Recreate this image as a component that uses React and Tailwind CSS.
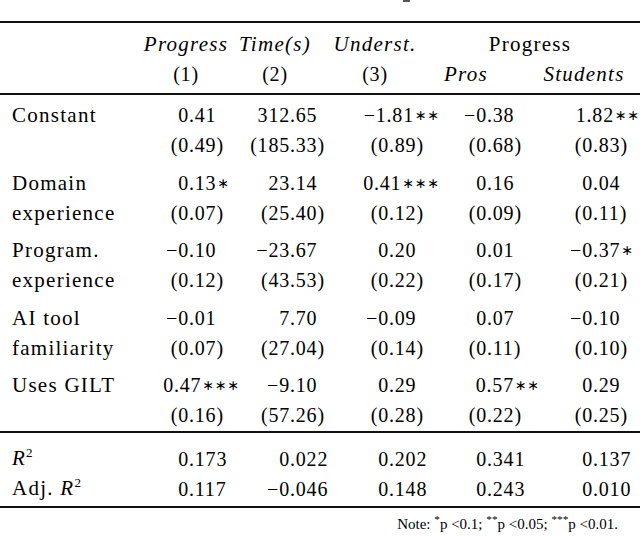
import React from "react";

const intWidths = ["w-[49px]", "w-[50px]", "w-[49px]", "w-[47px]", "w-[53px]"];

const groups = [
  {
    label: ["Constant", ""],
    est: ["0.41", "312.65", "−1.81**", "−0.38", "1.82**"],
    se: ["(0.49)", "(185.33)", "(0.89)", "(0.68)", "(0.83)"],
  },
  {
    label: ["Domain", "experience"],
    est: ["0.13*", "23.14", "0.41***", "0.16", "0.04"],
    se: ["(0.07)", "(25.40)", "(0.12)", "(0.09)", "(0.11)"],
  },
  {
    label: ["Program.", "experience"],
    est: ["−0.10", "−23.67", "0.20", "0.01", "−0.37*"],
    se: ["(0.12)", "(43.53)", "(0.22)", "(0.17)", "(0.21)"],
  },
  {
    label: ["AI tool", "familiarity"],
    est: ["−0.01", "7.70", "−0.09", "0.07", "−0.10"],
    se: ["(0.07)", "(27.04)", "(0.14)", "(0.11)", "(0.10)"],
  },
  {
    label: ["Uses GILT", ""],
    est: ["0.47***", "−9.10", "0.29", "0.57**", "0.29"],
    se: ["(0.16)", "(57.26)", "(0.28)", "(0.22)", "(0.25)"],
  },
];

const r2 = ["0.173", "0.022", "0.202", "0.341", "0.137"];
const adjR2 = ["0.117", "−0.046", "0.148", "0.243", "0.010"];

// split on the decimal point so every column lines up on it
function Num({ value, col }) {
  const stars = (value.match(/\*+$/) || [""])[0];
  const body = value.slice(0, value.length - stars.length);
  const dot = body.indexOf(".");
  const left = body.slice(0, dot);
  const right = body.slice(dot);
  return (
    <div className="flex whitespace-nowrap">
      <span className={`${intWidths[col]} text-right`}>{left}</span>
      <span>{right}</span>
      {stars && (
        <span className="text-[14px] ml-px font-['DejaVu_Sans',sans-serif]">
          {"∗".repeat(stars.length)}
        </span>
      )}
    </div>
  );
}

function Row({ label, values }) {
  return (
    <div className="grid grid-cols-[140px_100px_100px_100px_100px_100px] h-[30px] items-center">
      <div className="pl-3 text-[21px] tracking-[0.06em]">{label}</div>
      {values.map((v, i) => (
        <Num key={i} value={v} col={i} />
      ))}
    </div>
  );
}

function R2Label({ adj }) {
  return (
    <span>
      {adj ? "Adj. " : ""}
      <i>R</i>
      <span className="text-[13px] relative -top-[8px]">2</span>
    </span>
  );
}

export default function App() {
  return (
    <div className="w-[640px] h-[537px] bg-white text-black text-[20px] leading-[30px] tracking-[0.04em] overflow-hidden font-['Liberation_Serif',serif]">
      <div className="h-[21px]">
        <div className="ml-[403px] w-[7px] h-[2px] bg-[#555]" />
      </div>
      <div className="h-[2px] bg-[#111]" />

      <div className="pt-[6px] italic text-[21px] tracking-[0.06em]">
        <div className="grid grid-cols-[140px_92px_86px_114px_68px_40px_88px] h-[30px] items-center text-center">
          <div />
          <div>Progress</div>
          <div>Time(s)</div>
          <div>Underst.</div>
          <div className="col-span-3 not-italic">Progress</div>
        </div>
        <div className="grid grid-cols-[140px_92px_86px_114px_68px_40px_88px] h-[30px] items-center text-center">
          <div />
          <div className="not-italic text-[20px] tracking-[0.04em]">(1)</div>
          <div className="not-italic text-[20px] tracking-[0.04em]">(2)</div>
          <div className="not-italic text-[20px] tracking-[0.04em]">(3)</div>
          <div>Pros</div>
          <div />
          <div>Students</div>
        </div>
      </div>
      <div className="mt-[4px] h-[1.5px] bg-[#111]" />

      <div className="pt-[5.5px] flex flex-col gap-[7.5px]">
        {groups.map((g, i) => (
          <div key={i}>
            <Row label={g.label[0]} values={g.est} />
            <Row label={g.label[1]} values={g.se} />
          </div>
        ))}
      </div>
      <div className="mt-[1px] h-[1.5px] bg-[#111]" />

      <div className="pt-[10px]">
        <Row label={<R2Label />} values={r2} />
        <Row label={<R2Label adj />} values={adjR2} />
      </div>
      <div className="mt-[3px] h-[2px] bg-[#111]" />

      <div className="text-right pr-[22px] text-[15px] leading-[24px] pt-[4px] tracking-normal">
        Note: <sup>*</sup>p &lt;0.1; <sup>**</sup>p &lt;0.05; <sup>***</sup>p &lt;0.01.
      </div>
    </div>
  );
}
